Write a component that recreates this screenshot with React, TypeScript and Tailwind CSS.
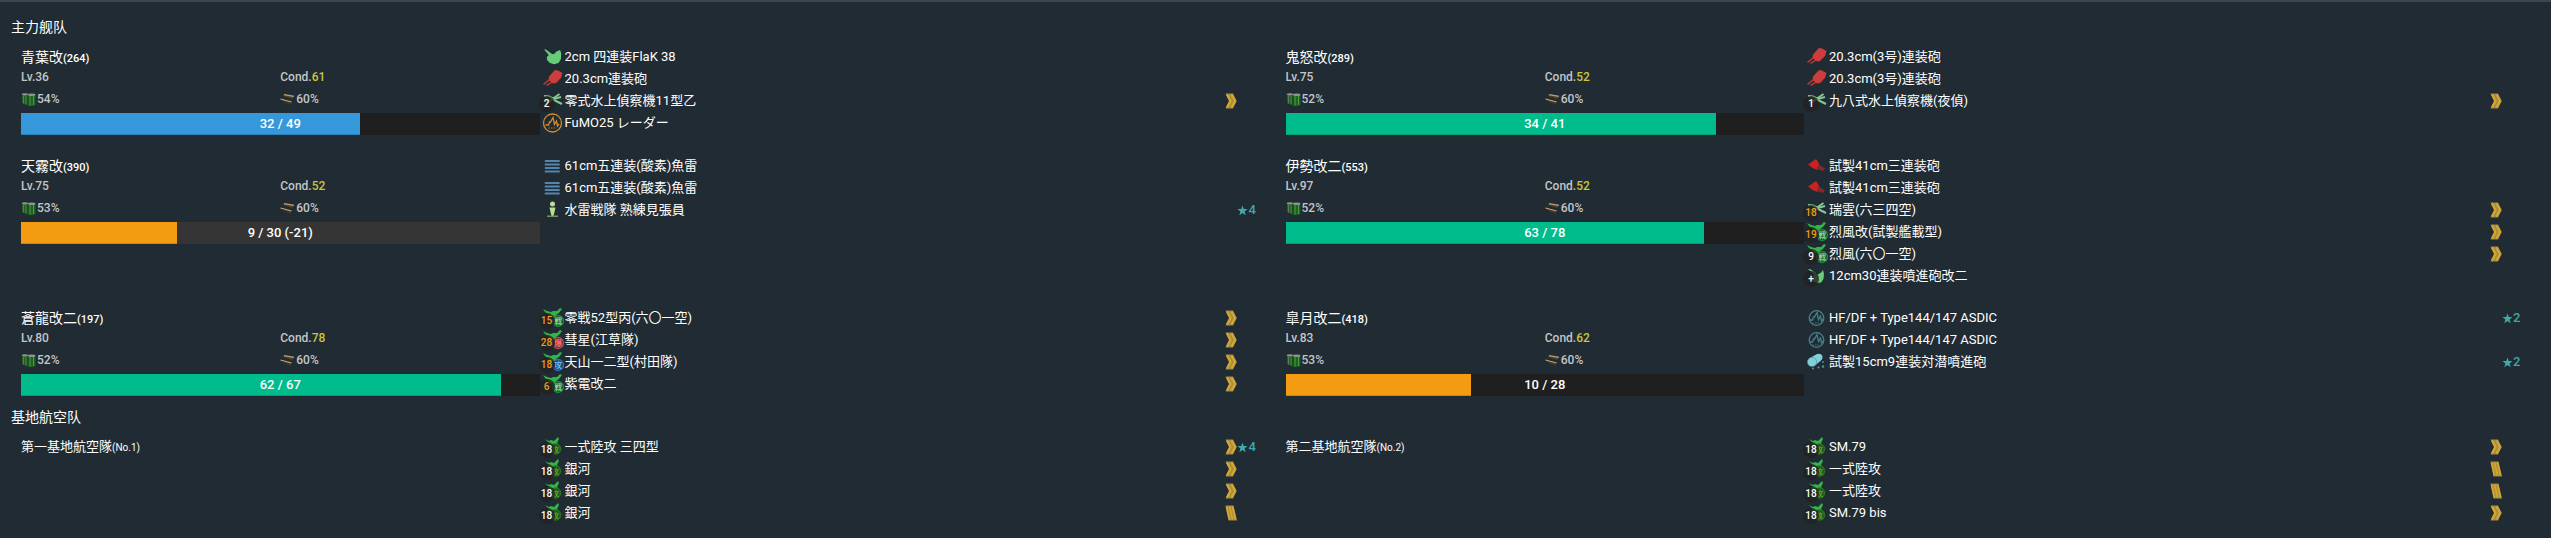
import React from "react";

type Kind =
  | "flak"
  | "mediumGun"
  | "largeGun"
  | "seaplane"
  | "radar"
  | "torpedo"
  | "lookout"
  | "fighter"
  | "bomber"
  | "torpedoBomber"
  | "landAttacker"
  | "sonar"
  | "depthCharge"
  | "rocket";

type Rank = "double" | "triple";

interface Equip {
  kind: Kind;
  name: string;
  count?: string;
  low?: boolean;
  rank?: Rank;
  star?: number;
}

interface Ship {
  name: string;
  id: number;
  level: number;
  cond: number;
  fuel: number;
  ammo: number;
  hp: number;
  maxHp: number;
  lost?: number;
  equips: Equip[];
}

interface AirBase {
  name: string;
  no: number;
  equips: Equip[];
}

const ships: Ship[] = [
  {
    name: "青葉改", id: 264, level: 36, cond: 61, fuel: 54, ammo: 60, hp: 32, maxHp: 49,
    equips: [
      { kind: "flak", name: "2cm 四連装FlaK 38" },
      { kind: "mediumGun", name: "20.3cm連装砲" },
      { kind: "seaplane", name: "零式水上偵察機11型乙", count: "2", rank: "double" },
      { kind: "radar", name: "FuMO25 レーダー" },
    ],
  },
  {
    name: "鬼怒改", id: 289, level: 75, cond: 52, fuel: 52, ammo: 60, hp: 34, maxHp: 41,
    equips: [
      { kind: "mediumGun", name: "20.3cm(3号)連装砲" },
      { kind: "mediumGun", name: "20.3cm(3号)連装砲" },
      { kind: "seaplane", name: "九八式水上偵察機(夜偵)", count: "1", rank: "double" },
    ],
  },
  {
    name: "天霧改", id: 390, level: 75, cond: 52, fuel: 53, ammo: 60, hp: 9, maxHp: 30, lost: 21,
    equips: [
      { kind: "torpedo", name: "61cm五連装(酸素)魚雷" },
      { kind: "torpedo", name: "61cm五連装(酸素)魚雷" },
      { kind: "lookout", name: "水雷戦隊 熟練見張員", star: 4 },
    ],
  },
  {
    name: "伊勢改二", id: 553, level: 97, cond: 52, fuel: 52, ammo: 60, hp: 63, maxHp: 78,
    equips: [
      { kind: "largeGun", name: "試製41cm三連装砲" },
      { kind: "largeGun", name: "試製41cm三連装砲" },
      { kind: "seaplane", name: "瑞雲(六三四空)", count: "18", low: true, rank: "double" },
      { kind: "fighter", name: "烈風改(試製艦載型)", count: "19", low: true, rank: "double" },
      { kind: "fighter", name: "烈風(六〇一空)", count: "9", rank: "double" },
      { kind: "rocket", name: "12cm30連装噴進砲改二", count: "+" },
    ],
  },
  {
    name: "蒼龍改二", id: 197, level: 80, cond: 78, fuel: 52, ammo: 60, hp: 62, maxHp: 67,
    equips: [
      { kind: "fighter", name: "零戦52型丙(六〇一空)", count: "15", low: true, rank: "double" },
      { kind: "bomber", name: "彗星(江草隊)", count: "28", low: true, rank: "double" },
      { kind: "torpedoBomber", name: "天山一二型(村田隊)", count: "18", low: true, rank: "double" },
      { kind: "fighter", name: "紫電改二", count: "6", low: true, rank: "double" },
    ],
  },
  {
    name: "皐月改二", id: 418, level: 83, cond: 62, fuel: 53, ammo: 60, hp: 10, maxHp: 28,
    equips: [
      { kind: "sonar", name: "HF/DF + Type144/147 ASDIC", star: 2 },
      { kind: "sonar", name: "HF/DF + Type144/147 ASDIC" },
      { kind: "depthCharge", name: "試製15cm9連装対潜噴進砲", star: 2 },
    ],
  },
];

const airBases: AirBase[] = [
  {
    name: "第一基地航空隊", no: 1,
    equips: [
      { kind: "landAttacker", name: "一式陸攻 三四型", count: "18", rank: "double", star: 4 },
      { kind: "landAttacker", name: "銀河", count: "18", rank: "double" },
      { kind: "landAttacker", name: "銀河", count: "18", rank: "double" },
      { kind: "landAttacker", name: "銀河", count: "18", rank: "triple" },
    ],
  },
  {
    name: "第二基地航空隊", no: 2,
    equips: [
      { kind: "landAttacker", name: "SM.79", count: "18", rank: "double" },
      { kind: "landAttacker", name: "一式陸攻", count: "18", rank: "triple" },
      { kind: "landAttacker", name: "一式陸攻", count: "18", rank: "triple" },
      { kind: "landAttacker", name: "SM.79 bis", count: "18", rank: "double" },
    ],
  },
];

function Plane({ ring, fill, mark, glyph }: { ring: string; fill: string; mark: string; glyph: string }) {
  return (
    <>
      <path d="M1 2 L5 4 L9 5 L11 4 L15 4 L18 1 L20 2 L17 6 L14 8 L15 11 L11 10 L6 11 L7 8 L3 5 Z" fill="#33b34a" />
      <circle cx="16" cy="14" r="5.5" fill={fill} stroke={ring} strokeWidth="1.3" />
      <text x="16" y="17" textAnchor="middle" fontSize="8" fontWeight="700" fill={mark}>
        {glyph}
      </text>
    </>
  );
}

function Scope({ color, r }: { color: string; r: number }) {
  return (
    <g fill="none" stroke={color}>
      <circle cx="10.5" cy="11" r={r} strokeWidth="1.3" />
      <path d="M3.5 13 L6.5 13 L7.5 10 L8.5 10 L11 5.5 L12.5 12.5 L14.5 9 L15.5 14 L17 12" strokeWidth="1.3" />
      <path d="M6.5 16 H14.5" strokeWidth="0.8" strokeDasharray="1.5 1" />
    </g>
  );
}

function EquipGlyph({ kind }: { kind: Kind }) {
  switch (kind) {
    case "flak":
      return (
        <g fill="#66cc77">
          <path d="M2 3.5 L4 3.5 L10 8 L8.5 11 Z" />
          <path d="M8 8 L12 8 L14.5 5.5 L18 4 L19.2 7 L19 13 L16.5 17 L12 18.2 L8 17 L5 14 L4.8 11 Z" />
        </g>
      );
    case "rocket":
      return (
        <g fill="#66cc77">
          <path d="M2 4 L4 4 L10 8 L9 10 Z" />
          <path d="M8 9 L12 9.5 L15 7.5 L17 5 L18 9 L17.5 14 L15 17.5 L11 18 L7 16 Z" />
        </g>
      );
    case "mediumGun":
      return (
        <g fill="#cf3c3c">
          <path d="M7 8.5 L13 2 L16 2.5 L20.5 5 L19 10 L14 15 L11 15.5 L6.5 12 Z" />
          <path d="M7 12 L1.5 16.5 M10 14 L4.5 17.5" stroke="#cf3c3c" strokeWidth="1.3" />
        </g>
      );
    case "largeGun":
      return (
        <g>
          <path d="M2 9.5 L10 4 L11.5 6 L13.5 10 L11.5 15 L6.5 13 Z" fill="#c92222" />
          <path d="M12.5 9.5 L19 13.5 L17 16 L10.5 13.5 Z" fill="#822930" />
        </g>
      );
    case "seaplane":
      return (
        <g fill="none" stroke="#86c894">
          <path d="M2 6 L7 6.5 L12 9 L19 7" strokeWidth="2" />
          <path d="M17.5 4 L11 8.5 L4 14" strokeWidth="2" />
          <path d="M9 9 L14 11 L20 14" strokeWidth="2" />
          <path d="M2 11.5 L9 10" strokeWidth="1.2" />
        </g>
      );
    case "radar":
      return <Scope color="#d48c2c" r={9} />;
    case "sonar":
      return <Scope color="#47808a" r={7.3} />;
    case "torpedo":
      return (
        <path d="M3.5 6 H17 M3.5 9.5 H17 M3.5 13 H17 M3.5 16.5 H17" stroke="#5285b0" strokeWidth="1.8" strokeLinecap="round" fill="none" />
      );
    case "lookout":
      return (
        <g fill="#b9df92">
          <circle cx="10.5" cy="5" r="2.5" />
          <path d="M7.5 8.5 H13.5 L12.5 13 L11.5 17 H9.5 L8.5 13 Z" />
          <path d="M5 16.5 H16 V18 H5 Z" fill="#75935f" />
        </g>
      );
    case "fighter":
      return <Plane ring="#1f8a3d" fill="#21492f" mark="#7fd694" glyph="戦" />;
    case "bomber":
      return <Plane ring="#b34a50" fill="#4b3036" mark="#ff6b70" glyph="爆" />;
    case "torpedoBomber":
      return <Plane ring="#3d6fa5" fill="#25405c" mark="#65b5ff" glyph="攻" />;
    case "landAttacker":
      return (
        <>
          <path d="M3 3 L7 5 L9 4 L12 5 L16 1 L17 3 L15 7 L17 9 L12 8 L8 9 L5 9 L7 7 Z" fill="#33b34a" />
          <circle cx="13.5" cy="13" r="5" fill="#225020" stroke="#2a701c" strokeWidth="1.6" />
          <text x="13.5" y="15.5" textAnchor="middle" fontSize="7" fontWeight="700" fill="#48ae20">
            攻
          </text>
        </>
      );
    case "depthCharge":
      return (
        <g fill="#7fd0dc">
          <path d="M3 7.5 L11 3 Q15 2 16.5 5 Q17 8 14.5 10 L9 14.5 Z" />
          <circle cx="6" cy="11" r="4.6" stroke="#4b8793" strokeWidth="0.6" />
          <g fill="#5a929e">
            <circle cx="7" cy="17.5" r="1" />
            <circle cx="12.5" cy="16.5" r="1.1" />
            <circle cx="17" cy="15.5" r="1.2" />
            <circle cx="17" cy="11" r="0.9" />
          </g>
        </g>
      );
  }
}

function EquipIcon({ kind, count, low }: { kind: Kind; count?: string; low?: boolean }) {
  return (
    <span className="relative h-[22px] w-[22px] shrink-0">
      <svg viewBox="0 0 22 22" className="h-[22px] w-[22px]" aria-hidden="true">
        <EquipGlyph kind={kind} />
      </svg>
      {count && (
        <span
          className={`absolute bottom-0 -left-[3px] flex h-4 w-4 items-center justify-center rounded-full bg-[#222222]/80 text-[10px] leading-none font-medium ${
            low ? "text-[#f39c12]" : "text-white"
          }`}
        >
          {count}
        </span>
      )}
    </span>
  );
}

function RankIcon({ rank }: { rank: Rank }) {
  return (
    <svg viewBox="0 0 12 16" className="h-4 w-3" fill="none" aria-hidden="true">
      {rank === "double" ? (
        <>
          <path d="M0.5 0.5 H8 L11.8 8 L8 15.5 H0.5 L4 8 Z" fill="#a08c4c" />
          <path d="M2 1.5 L5.5 8 L2 14.5 M6.5 1.5 L10 8 L6.5 14.5" stroke="#d9a62c" strokeWidth="2.2" />
        </>
      ) : (
        <>
          <path d="M0.5 0.5 H8.5 L12 15.5 H3.5 Z" fill="#a08c4c" />
          <path d="M1.5 1.5 L4.5 14.5 M4.5 1.5 L7.5 14.5 M7.5 1.5 L10.5 14.5" stroke="#d9a62c" strokeWidth="1.8" />
        </>
      )}
    </svg>
  );
}

function FuelIcon() {
  return (
    <svg viewBox="0 0 15 15" className="h-[15px] w-[15px]" aria-hidden="true">
      <path d="M1 2.5 L7 3 V13.5 L1 11 Z" fill="#245c25" />
      <path d="M2.5 3.5 V11.5 M5 4 V12.5" stroke="#5b8f5b" strokeWidth="0.8" />
      <path d="M6.5 3 H14.5 V13 Q11 15 6.5 13.5 Z" fill="#1e621f" />
      <path d="M9 4 V13.5 M12.5 4 V13" stroke="#4d9a4c" strokeWidth="1" />
      <path d="M7 3 V13.5" stroke="#17351b" strokeWidth="0.8" />
      <ellipse cx="4" cy="2.3" rx="3.2" ry="1.1" fill="#8d958e" />
      <ellipse cx="10.7" cy="2.8" rx="3.8" ry="1.2" fill="#8d958e" />
    </svg>
  );
}

function AmmoIcon() {
  return (
    <svg viewBox="0 0 15 15" className="h-[15px] w-[15px]" aria-hidden="true">
      <path d="M4 2 L14 4 L12.5 7 L3 4 Z" fill="#4e4229" />
      <path d="M4 2.6 L14 4.4" stroke="#b5a278" strokeWidth="1.1" />
      <path d="M0.5 6.5 L12 9.5 L10.5 13 L4 10.5 Z" fill="#40341f" />
      <path d="M0.5 7 L11.5 10" stroke="#bba97d" strokeWidth="1.2" />
    </svg>
  );
}

function EquipList({ equips }: { equips: Equip[] }) {
  return (
    <ul className="w-7/12 pl-0.5 text-[13px] leading-[22px]">
      {equips.map((e, i) => (
        <li key={i} className="flex h-[22px] items-center">
          <EquipIcon kind={e.kind} count={e.count} low={e.low} />
          <span className="ml-px min-w-0 flex-1 truncate">{e.name}</span>
          <span className="w-3 shrink-0">{e.rank && <RankIcon rank={e.rank} />}</span>
          <span className="flex w-7 shrink-0 items-center text-[13px] font-medium text-[#3fa9a5]">
            {e.star && (
              <>
                <svg viewBox="0 0 11 11" className="h-[11px] w-[11px]" fill="currentColor" aria-label="★">
                  <path d="M5.5 0.5 L6.8 4.1 H10.6 L7.6 6.4 L8.7 10.2 L5.5 8 L2.3 10.2 L3.4 6.4 L0.4 4.1 H4.2 Z" />
                </svg>
                {e.star}
              </>
            )}
          </span>
        </li>
      ))}
    </ul>
  );
}

function HpBar({ hp, maxHp, lost }: { hp: number; maxHp: number; lost?: number }) {
  const ratio = hp / maxHp;
  const tone = ratio > 0.75 ? "bg-[#00bc8c]" : ratio > 0.5 ? "bg-[#3498db]" : "bg-[#f39c12]";
  return (
    <div
      role="progressbar"
      aria-label="HP"
      aria-valuenow={hp}
      aria-valuemax={maxHp}
      className={`mt-[3px] grid h-[22px] text-center text-[13px] leading-[21px] font-medium ${lost ? "bg-[#353535]" : "bg-[#1f1f1f]"}`}
    >
      <div
        className={`col-start-1 row-start-1 shadow-[inset_0_-1px_0_rgba(0,0,0,0.15)] ${tone}`}
        style={{ width: `${ratio * 100}%` }}
      />
      <span className="col-start-1 row-start-1">
        {hp} / {maxHp}
        {lost && ` (-${lost})`}
      </span>
    </div>
  );
}

function ShipCard({ ship }: { ship: Ship }) {
  return (
    <article className="flex p-2.5">
      <div className="w-5/12">
        <h3 className="h-5 text-[14px] leading-[22px]">
          {ship.name}
          <span className="text-[11px] font-medium">({ship.id})</span>
        </h3>
        <div className="grid grid-cols-2 text-[12px] leading-[22px] font-medium text-[#c3c6c8]">
          <span>Lv.{ship.level}</span>
          <span>
            Cond.<span className="text-[#c8c837]">{ship.cond}</span>
          </span>
          <span className="flex items-center gap-px">
            <FuelIcon />
            {ship.fuel}%
          </span>
          <span className="flex items-center gap-px">
            <AmmoIcon />
            {ship.ammo}%
          </span>
        </div>
        <HpBar hp={ship.hp} maxHp={ship.maxHp} lost={ship.lost} />
      </div>
      <EquipList equips={ship.equips} />
    </article>
  );
}

function AirBaseCard({ base }: { base: AirBase }) {
  return (
    <article className="flex p-2.5">
      <h3 className="w-5/12 text-[13px] leading-[22px]">
        {base.name}
        <span className="text-[10px]">(No.{base.no})</span>
      </h3>
      <EquipList equips={base.equips} />
    </article>
  );
}

export default function App() {
  return (
    <main className="min-h-screen border-t-2 border-[#3b4650] bg-[#212b33] px-[11px] pt-3.5 pb-1.5 font-[Roboto,'Noto_Sans_CJK_JP',sans-serif] text-white">
      <section>
        <h2 className="h-5 font-[Roboto,'Noto_Sans_CJK_SC',sans-serif] text-[14px] leading-[22px]">主力舰队</h2>
        <div className="grid grid-cols-2">
          {ships.map((s) => (
            <ShipCard key={s.id} ship={s} />
          ))}
        </div>
      </section>
      <section>
        <h2 className="h-5 font-[Roboto,'Noto_Sans_CJK_SC',sans-serif] text-[14px] leading-[22px]">基地航空队</h2>
        <div className="grid grid-cols-2">
          {airBases.map((b) => (
            <AirBaseCard key={b.no} base={b} />
          ))}
        </div>
      </section>
    </main>
  );
}
